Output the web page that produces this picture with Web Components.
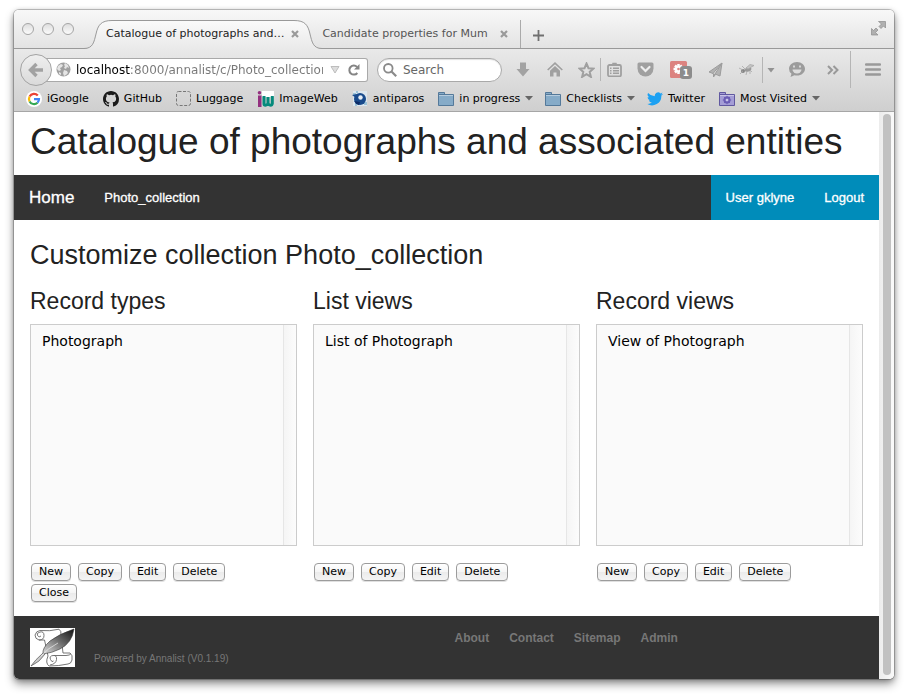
<!DOCTYPE html>
<html lang="en">
<head>
<meta charset="utf-8">
<title>Catalogue of photographs and associated entities</title>
<style>
  body { margin: 0; background: #fff; font-family: "Liberation Sans", Arial, sans-serif; color: #222; }
</style>
</head>
<body>
<browser-window>
  <tab-strip slot="chrome">
    <browser-tab active>Catalogue of photographs and…</browser-tab>
    <browser-tab>Candidate properties for Mum</browser-tab>
  </tab-strip>
  <nav-toolbar slot="chrome"></nav-toolbar>
  <bookmarks-bar slot="chrome">
    <bookmark-item icon="google">iGoogle</bookmark-item>
    <bookmark-item icon="github">GitHub</bookmark-item>
    <bookmark-item icon="blank">Luggage</bookmark-item>
    <bookmark-item icon="iw">ImageWeb</bookmark-item>
    <bookmark-item icon="anti">antiparos</bookmark-item>
    <bookmark-item icon="folder" menu>in progress</bookmark-item>
    <bookmark-item icon="folder" menu>Checklists</bookmark-item>
    <bookmark-item icon="twitter">Twitter</bookmark-item>
    <bookmark-item icon="smart" menu>Most Visited</bookmark-item>
  </bookmarks-bar>
  <site-header>Catalogue of photographs and associated entities</site-header>
  <site-menu></site-menu>
  <collection-editor>
    <list-panel heading="Record types" item="Photograph" close></list-panel>
    <list-panel heading="List views" item="List of Photograph"></list-panel>
    <list-panel heading="Record views" item="View of Photograph"></list-panel>
  </collection-editor>
  <site-footer></site-footer>
</browser-window>

<script>
const UI = '"DejaVu Sans", Verdana, sans-serif';

function define(name, render) {
  customElements.define(name, class extends HTMLElement {
    constructor() {
      super();
      this.attachShadow({ mode: 'open' });
    }
    connectedCallback() {
      this.shadowRoot.innerHTML = '<style>:host,*{box-sizing:border-box}svg{display:block}</style>' + render(this);
    }
  });
}

define('browser-window', () => `
  <style>
    :host { display: block; padding: 10px 14px 20px; }
    .frame { border-radius: 5px; overflow: hidden; background: #fff; }
    .shadow { border-radius: 5px; box-shadow: 0 0 0 1px rgba(0,0,0,.2), 0 5px 10px rgba(0,0,0,.42), 0 1px 5px rgba(0,0,0,.25); }
    .chrome { position: relative; background: linear-gradient(#f8f8f8, #e3e3e3 38px, #e9e9e9 39px, #cfcfcf); border-bottom: 1px solid #a6a6a6; }
    .view { display: flex; }
    main { flex: 1; min-width: 0; }
    .track { width: 15px; padding: 2px 3px 4px 4px; background: linear-gradient(90deg, #ececec, #fafafa); display: flex; }
    .thumb { flex: 1; border-radius: 4px; background: #c1c1c1; }
  </style>
  <div class="shadow"><div class="frame">
    <div class="chrome"><slot name="chrome"></slot></div>
    <div class="view"><main><slot></slot></main><div class="track"><div class="thumb"></div></div></div>
  </div></div>`);

define('tab-strip', () => `
  <style>
    :host { display: flex; height: 39px; padding: 10px 8px 0 8px; align-items: stretch; border-bottom: 1px solid #999; }
    .lights { display: flex; gap: 8px; padding: 3px 16px 0 0; }
    .lights i { width: 12px; height: 12px; border: 1px solid #a5a5a5; border-radius: 50%; background: linear-gradient(#dedede, #fbfbfb); }
    button { border: 0; padding: 0; background: none; }
    .add { border-left: 1px solid #aaa; padding: 3px 12px 0; }
    .full { margin: 0 0 12px auto; }
  </style>
  <div class="lights"><i></i><i></i><i></i></div>
  <slot></slot>
  <button class="add" aria-label="New tab"><svg width="11" height="11" viewBox="0 0 11 11"><path d="M5.500 0v11M0 5.500h11" stroke="#707070" stroke-width="1.800"/></svg></button>
  <button class="full" aria-label="Full screen"><svg width="15" height="15" viewBox="0 0 15 15" fill="#b0b0b0" stroke="#8c8c8c" stroke-width=".7"><path d="M7.500.500h7v6.500l-2-2-2.500 2.500-2-2 2.500-2.500zM.500 7.500l2 2 2.500-2.500 2 2-2.500 2.500 2.500 2.500H.500z"/></svg></button>`);

define('browser-tab', el => {
  const on = el.hasAttribute('active');
  return `
  <style>
    :host { display: flex; position: relative; align-items: center; font: 11px/16px ${UI}; color: ${on ? '#222' : '#555'}; padding: ${on ? '0 13px 0 16px' : '0 8px 0 6px'}; ${on ? 'z-index:1;' : ''} white-space: nowrap; }
    .shape { position: absolute; left: -6px; right: -6px; top: 0; height: 30px; display: flex; }
    .mid { flex: 1; background: linear-gradient(#fafafa, #e9e9e9); border-top: 1px solid #999; }
    .label { position: relative; }
    button { position: relative; border: 0; padding: 4px; margin-left: ${on ? 3 : 8}px; background: none; }
  </style>
  ${on ? `<svg width="0" height="0" style="position:absolute"><defs><linearGradient id="g" x2="0" y2="1"><stop stop-color="#fafafa"/><stop offset="1" stop-color="#e9e9e9"/></linearGradient></defs></svg>
  <div class="shape">
    <svg width="28" height="30" viewBox="0 0 28 30"><path d="M0 30V28.500C9 28.500 10 22 12 14 14 5 17 .500 28 .500V30z" fill="url(#g)"/><path d="M0 28.500C9 28.500 10 22 12 14 14 5 17 .500 28 .500" fill="none" stroke="#999"/></svg>
    <div class="mid"></div>
    <svg width="28" height="30" viewBox="0 0 28 30"><path d="M28 30V28.500C19 28.500 18 22 16 14 14 5 11 .500 0 .500V30z" fill="url(#g)"/><path d="M28 28.500C19 28.500 18 22 16 14 14 5 11 .500 0 .500" fill="none" stroke="#999"/></svg>
  </div>` : ''}
  <span class="label"><slot></slot></span>
  <button aria-label="Close tab"><svg width="8" height="8" viewBox="0 0 8 8"><path d="M1 1l6 6M7 1L1 7" stroke="#9a9a9a" stroke-width="2.200"/></svg></button>`;
});

define('tool-button', el => `
  <style>
    :host { display: block; align-self: center; flex: none; }
    button { display: flex; width: 100%; padding: 0; border: 0; background: none; justify-content: center; align-items: center; }
  </style>
  <button aria-label="${el.getAttribute('name')}"><slot></slot></button>`);

define('nav-toolbar', () => `
  <style>
    :host { display: flex; height: 41px; padding-left: 6px; align-items: center; font: 12px/16px ${UI}; }
    .back { position: relative; z-index: 1; flex: none; width: 32px; height: 32px; border: 1px solid #a3a3a3; border-radius: 50%; padding: 0; background: linear-gradient(#efefef, #dadada); display: flex; align-items: center; justify-content: center; }
    .url { flex: 1; min-width: 0; height: 24px; margin-left: -10px; padding: 0 7px 0 14px; display: flex; align-items: center; background: #fff; border: 1px solid #a9a9a9; border-left: 0; border-radius: 0 3px 3px 0; }
    .url input { flex: 1; min-width: 0; margin: 0 7px 0 5px; padding: 0; border: 0; outline: 0; font: inherit; background: linear-gradient(90deg, #000 54px, #777 54px); background-clip: text; -webkit-background-clip: text; -webkit-text-fill-color: transparent; }
    .url svg { flex: none; }
    .url button { border: 0; padding: 0; background: none; margin-left: 8px; }
    .search { flex: none; width: 125px; height: 24px; margin: 0 5px 0 9px; padding: 0 10px 0 5px; display: flex; align-items: center; gap: 6px; background: #fff; border: 1px solid #a9a9a9; border-radius: 12px; box-shadow: inset 0 1px 1px rgba(0,0,0,.12); }
    .search input { flex: 1; min-width: 0; padding: 0; border: 0; outline: 0; background: none; font: inherit; }
    .search input::placeholder { color: #666; opacity: 1; }
    .w16 { width: 16px; } .w26 { width: 26px; } .w30 { width: 30px; } .w32 { width: 32px; } .w34 { width: 34px; } .w38 { width: 38px; } .w36 { width: 36px; } .w43 { width: 43px; }
    .sep { box-shadow: -1px 0 0 #b5b5b5; padding: 4px 0; }
    .tall { padding: 12px 0; }
  </style>
  <button class="back" aria-label="Back"><svg width="16" height="16" viewBox="0 0 16 16"><path d="M15 8H3M8.500 2L2.500 8l6 6" fill="none" stroke="#a2a2a2" stroke-width="3.400"/></svg></button>
  <div class="url">
    <svg width="15" height="15" viewBox="0 0 15 15"><circle cx="7.500" cy="7.500" r="7" fill="#a0a0a0"/><path d="M2 4l3-2 2 1-1 2-2 1 1 2-2 1-2-2zM9 1l3 2 1 3-2-1-1 2-2-1 1-2-1-1zM8 8l3 1 1 2-2 2-2 1-1-3zM3 10l2 1 0 2-2-1z" fill="#e5e5e5"/></svg>
    <input aria-label="Address" value="localhost:8000/annalist/c/Photo_collection/">
    <svg width="10" height="9" viewBox="0 0 10 9"><path d="M1 1.500h8L5 8z" fill="#ddd" stroke="#bdbdbd"/></svg>
    <button aria-label="Reload"><svg width="12" height="12" viewBox="0 0 12 12"><path d="M9.300 9A4.500 4.500 0 1 1 9 2.900" fill="none" stroke="#858585" stroke-width="2"/><path d="M11.500 0v5.500H6z" fill="#858585"/></svg></button>
  </div>
  <label class="search">
    <svg width="14" height="14" viewBox="0 0 14 14" fill="none" stroke="#8a8a8a"><circle cx="5.300" cy="5.300" r="4.300" stroke-width="1.800"/><path d="M8.500 8.500l4.700 4.700" stroke-width="2.200"/></svg>
    <input aria-label="Search" placeholder="Search">
  </label>
  <tool-button class="w32" name="Downloads"><svg width="14" height="15" viewBox="0 0 14 15"><path d="M4 .500h6v6.500h3.500L7 14.500.500 7H4z" fill="#a3a3a3"/></svg></tool-button>
  <tool-button class="w32" name="Home"><svg width="16" height="15" viewBox="0 0 16 15"><path d="M.700 8L8 1.200 15.300 8" fill="none" stroke="#a0a0a0" stroke-width="1.600"/><path d="M3 8.700l5-4.600 5 4.600V14.500H9.500v-4h-3v4H3z" fill="#a0a0a0"/></svg></tool-button>
  <tool-button class="w30" name="Bookmark"><svg width="17" height="16" viewBox="0 0 17 16"><path d="M8.500 1.500l2 4.700 5 .400-3.800 3.300 1.200 5-4.400-2.700-4.400 2.700 1.200-5L1.500 6.600l5-.400z" fill="none" stroke="#a0a0a0" stroke-width="2"/></svg></tool-button>
  <tool-button class="w26 sep" name="Bookmark list"><svg width="15" height="15" viewBox="0 0 15 15"><rect x="1" y="3" width="13" height="11.300" rx="1.500" fill="none" stroke="#a0a0a0" stroke-width="1.800"/><path d="M4.500 3.500L5.500 .700h4l1 2.800z" fill="#a0a0a0"/><path d="M3 6.300h1.500M6 6.300h6M3 8.800h1.500M6 8.800h6M3 11.300h1.500M6 11.300h6" stroke="#a0a0a0" stroke-width="1.400"/></svg></tool-button>
  <tool-button class="w36" name="Pocket"><svg width="17" height="15" viewBox="0 0 17 15"><path d="M2 .500h13q1.500 0 1.500 1.500v4.500a8 8 0 0 1-16 0V2Q.500.500 2 .500z" fill="#a0a0a0"/><path d="M4.500 5l4 4 4-4" fill="none" stroke="#eee" stroke-width="2.200" stroke-linecap="round"/></svg></tool-button>
  <tool-button class="w36" name="Blocked items: 1"><svg width="22" height="19" viewBox="0 0 22 19"><rect width="17" height="17" y="1" rx="1.500" fill="#dc8380"/><path d="M8.500 4v10M3.500 9h10M5 5.500l7 7M12 5.500l-7 7" stroke="#fff" stroke-width="2.500"/><circle cx="8.500" cy="9" r="1.300" fill="#dc8380"/><rect x="10" y="6" width="12" height="13" rx="3" fill="#8c8c8c"/><text x="16" y="16" text-anchor="middle" font-family="DejaVu Sans" font-size="9" font-weight="bold" fill="#fff">1</text></svg></tool-button>
  <tool-button class="w32" name="Send"><svg width="15" height="16" viewBox="0 0 15 16"><path d="M14 1L1 10l4 1.500zM14 1L7 12l5 2z" fill="#b2b2b2" stroke="#9c9c9c"/><path d="M5.500 11.500V15l2-2.500" fill="#9c9c9c" stroke="#9c9c9c"/></svg></tool-button>
  <tool-button class="w32" name="Bug tracker"><svg width="16" height="13" viewBox="0 0 16 13"><ellipse cx="9" cy="6.500" rx="3.500" ry="2" fill="#9a9a9a" transform="rotate(-20 9 6.500)"/><circle cx="4" cy="8" r="2" fill="#858585"/><path d="M7 5L11 1.500 15 2.500 9 6zM0 5l4 2M1 11l3-3M7 12l1-4M11 11l0-3M13 9l-2-2M3 3l3 3" fill="#c5c5c5" stroke="#a8a8a8" stroke-width=".8"/></svg></tool-button>
  <tool-button class="w16 sep" name="Tracker options"><svg width="8" height="18" viewBox="0 0 8 18"><path d="M.500 7h7L4 11.500z" fill="#929292"/></svg></tool-button>
  <tool-button class="w36" name="Chat"><svg width="16" height="15" viewBox="0 0 16 15"><path d="M8 0c4.500 0 8 3 8 6.800s-3.500 6.800-8 6.800q-1.500 0-2.500-.400L1.500 15l1-3.200Q0 10 0 6.800C0 3 3.500 0 8 0z" fill="#9c9c9c"/><path d="M3.500 7.500h9a4.500 4 0 0 1-9 0z" fill="#ddd"/><path d="M5 3.500v2M11 3.500v2" stroke="#ddd" stroke-width="1.800"/></svg></tool-button>
  <tool-button class="w36" name="More tools"><svg width="12" height="10" viewBox="0 0 12 10"><path d="M1 1l4 4-4 4M6.500 1l4 4-4 4" fill="none" stroke="#999" stroke-width="2"/></svg></tool-button>
  <tool-button class="w43 sep tall" name="Menu"><svg width="16" height="13" viewBox="0 0 16 13"><path d="M1 1.500h14M1 6.500h14M1 11.500h14" stroke="#999" stroke-width="2.400" stroke-linecap="round"/></svg></tool-button>`);

define('bookmarks-bar', () => `
  <style>:host { display: flex; height: 21px; padding: 0 12px 4px; gap: 14px; align-items: center; }</style>
  <slot></slot>`);

const folder = (a, b, extra = '') => `<svg width="16" height="15" viewBox="0 0 16 15"><path d="M.500 4V1.500h6V4" fill="${a}" stroke="${b}"/><path d="M.500 3.500h15v11H.500z" fill="${a}" stroke="${b}"/><path d="M1 4.500h14" stroke="#fff" stroke-opacity=".4"/>${extra}</svg>`;
const ICONS = {
  google: `<svg width="16" height="16" viewBox="0 0 16 16"><circle cx="8" cy="8" r="8" fill="#fff"/><g fill="none" stroke-width="2.200"><path d="M11.800 4.600A5 5 0 0 0 3.600 5.600" stroke="#ea4335"/><path d="M3.600 5.600a5 5 0 0 0 0 4.800" stroke="#fbbc05"/><path d="M3.600 10.400a5 5 0 0 0 7.900 1.300" stroke="#34a853"/><path d="M11.500 11.700A5 5 0 0 0 13 8.100H8" stroke="#4285f4"/></g></svg>`,
  github: `<svg width="16" height="16" viewBox="0 0 16 16"><path fill="#1b1b1b" d="M8 0C3.580 0 0 3.580 0 8c0 3.540 2.290 6.530 5.470 7.590.400.070.550-.170.550-.380 0-.190-.010-.820-.010-1.490-2.010.370-2.530-.490-2.690-.940-.090-.230-.480-.940-.820-1.130-.280-.150-.680-.520-.010-.530.630-.010 1.080.580 1.230.820.720 1.210 1.870.870 2.330.660.070-.520.280-.870.510-1.070-1.780-.200-3.640-.890-3.640-3.950 0-.870.310-1.590.820-2.150-.080-.200-.360-1.020.080-2.120 0 0 .670-.210 2.200.820a7.500 7.500 0 0 1 4 0c1.530-1.040 2.200-.820 2.200-.820.440 1.100.160 1.920.080 2.120.510.560.820 1.270.820 2.150 0 3.070-1.870 3.750-3.650 3.950.290.250.540.730.540 1.480 0 1.070-.010 1.930-.010 2.200 0 .210.150.460.550.380A8 8 0 0 0 16 8c0-4.420-3.580-8-8-8z"/></svg>`,
  blank: `<svg width="15" height="15" viewBox="0 0 15 15"><rect x=".5" y=".5" width="14" height="14" rx="2" fill="none" stroke="#777" stroke-dasharray="3 1.500"/></svg>`,
  iw: `<svg width="17" height="16" viewBox="0 0 17 16"><path fill="#fff" d="M5 0h12v6H5z"/><circle cx="2.500" cy="1.800" r="1.800" fill="#93307f"/><path d="M1 4.500h3.500V16H1z" fill="#93307f"/><path d="M7 5v7.500q0 1.700 1.500 1.700t2.500-1.700V6v6.500q1 1.700 2.500 1.700t1.800-1.700V5" fill="none" stroke="#058a7c" stroke-width="3"/></svg>`,
  anti: `<svg width="16" height="16" viewBox="0 0 16 16"><path fill="#dce6ee" d="M1 0h14v15H1z"/><path d="M1 2h3v2H1zM4 0h2v2H4zM12 11h3v3h-3zM3 12h2v3H3z" fill="#9bc3d8"/><circle cx="8" cy="8" r="6" fill="#184a8c"/><path d="M2 10a7 7 0 0 0 5 4l1-3z" fill="#0b2b66"/><circle cx="8.500" cy="6.500" r="2.200" fill="#e6eef5"/><path d="M0 4l5-1-1 4z" fill="#184a8c"/></svg>`,
  folder: folder('#86abc8', '#54799a'),
  smart: folder('#a49dd6', '#6058a0', '<circle cx="8" cy="9" r="2.500" fill="none" stroke="#6a5db4" stroke-width="2"/><path d="M8 4.800v8.400M3.800 9h8.400M5 6l6 6M11 6l-6 6" stroke="#6a5db4"/><circle cx="8" cy="9" r="1.300" fill="#c9c4ea"/>'),
  twitter: `<svg width="16" height="14" viewBox="0 0 24 20"><path fill="#1da1f2" d="M24 2.400a10 10 0 0 1-2.800.800A5 5 0 0 0 23.300.400a10 10 0 0 1-3.100 1.200A4.900 4.900 0 0 0 11.800 6 14 14 0 0 1 1.700.900a4.900 4.900 0 0 0 1.500 6.600A5 5 0 0 1 1 6.900a4.900 4.900 0 0 0 4 4.900 5 5 0 0 1-2.300.100 4.900 4.900 0 0 0 4.600 3.400A10 10 0 0 1 0 17.300 14 14 0 0 0 21.500 4.800 10 10 0 0 0 24 2.400z"/></svg>`
};

define('bookmark-item', el => {
  const menu = el.hasAttribute('menu');
  const tag = menu ? 'button' : 'a href="#"';
  return `
  <style>
    :host { display: block; flex: none; }
    a, button { display: flex; align-items: center; gap: 5px; height: 17px; border: 0; padding: 0; background: none; font: 11px/16px ${UI}; color: #000; text-decoration: none; white-space: nowrap; }
    .caret { margin-right: -2px; }
  </style>
  <${tag}>${ICONS[el.getAttribute('icon')]}<slot></slot>${menu ? '<svg class="caret" width="8" height="5" viewBox="0 0 8 5"><path d="M0 0h8L4 4.500z" fill="#666"/></svg>' : ''}</${menu ? 'button' : 'a'}>`;
});

define('site-header', () => `
  <style>
    :host { display: block; padding: 6px 16px 9px; }
    h1 { margin: 0; font-size: 37px; line-height: 48px; font-weight: 400; white-space: nowrap; }
  </style>
  <h1><slot></slot></h1>`);

define('site-menu', () => `
  <style>
    :host { display: block; background: #333; }
    nav, .user { display: flex; }
    a { padding: 0 15px; font-size: 13px; line-height: 45px; color: #fff; text-decoration: none; -webkit-text-stroke: .3px #fff; }
    .home { font-size: 17px; }
    .user { margin-left: auto; background: #008cba; }
  </style>
  <nav><a class="home" href="#">Home</a><a href="#">Photo_collection</a>
    <div class="user"><a href="#">User gklyne</a><a href="#">Logout</a></div></nav>`);

define('collection-editor', () => `
  <style>
    :host { display: block; padding: 16px 16px 14px; }
    h2 { margin: 0 0 12px; font-size: 27px; line-height: 38px; font-weight: 400; }
    .cols { display: grid; grid-template-columns: repeat(3, minmax(0, 1fr)); gap: 16px; }
  </style>
  <h2>Customize collection Photo_collection</h2>
  <div class="cols"><slot></slot></div>`);

define('list-panel', el => `
  <style>
    :host { display: block; }
    h3 { margin: 0 0 8px; font-size: 23px; line-height: 30px; font-weight: 400; }
    .box { display: flex; height: 222px; border: 1px solid #ccc; background: #fafafa; }
    select { flex: 1; min-width: 0; border: 0; outline: 0; margin: 0; padding: 8px 9px; background: none; overflow: hidden; font: 14px/18px ${UI}; color: #000; }
    option { padding: 0 2px; min-height: 18px; color: #000; }
    .track { width: 13px; border-left: 1px solid #e6e6e6; background: linear-gradient(90deg, #f5f5f5, #fcfcfc); }
    .row { display: flex; gap: 7px; padding-left: 1px; margin-top: 3px; }
    .first { margin-top: 17px; }
    .row button { height: 18px; padding: 0 7px; border: 1px solid #9c9c9c; border-radius: 4px; background: linear-gradient(#fff, #f5f5f5 50%, #ebebeb 51%, #f4f4f4); box-shadow: 0 1px 0 rgba(0,0,0,.12); font: 11px/14px ${UI}; color: #000; }
  </style>
  <h3><label for="list">${el.getAttribute('heading')}</label></h3>
  <div class="box"><select id="list" size="10"><option>${el.getAttribute('item')}</option></select><div class="track"></div></div>
  <div class="row first"><button>New</button><button>Copy</button><button>Edit</button><button>Delete</button></div>
  ${el.hasAttribute('close') ? '<div class="row"><button>Close</button></div>' : ''}`);

define('site-footer', () => `
  <style>
    :host { display: grid; grid-template-columns: 1fr 1fr; padding: 12px 16px; background: #333; color: #777; }
    .brand { display: flex; align-items: flex-end; gap: 19px; font-size: 10px; line-height: 16px; }
    nav { display: flex; gap: 20px; padding-left: 8px; }
    a { font-size: 12px; line-height: 21px; font-weight: 700; color: #777; text-decoration: none; }
  </style>
  <div class="brand">
    <svg width="45" height="39" viewBox="0 0 45 39"><defs><linearGradient id="q" x1="1" y1="0" x2="0" y2="1"><stop stop-color="#111"/><stop offset=".45" stop-color="#666"/><stop offset="1" stop-color="#ddd"/></linearGradient></defs>
      <path fill="#fff" d="M0 0h45v39H0z"/>
      <g fill="#fff" stroke="#666" stroke-width=".9"><path d="M10 2.500Q20 3.500 29 1.200q2.500 1.500 2 6L33 25H40q3 2 2 7-1 4-4 4-9 2-19 2-4-3-1-10L14.500 12H9q-4-1-4-5 1-4 5-4.500z"/><path d="M9 12q5 0 5-4.500T10 4 7.500 7.500 11 8M20 37q6-1 6.500-5.500T23 27.500t-2.500 4 3 1.500M24 27.500h12q4 0 5-2" fill="none"/></g>
      <path d="M44 1Q42 15 30 21 22 25 13 26 12 20 20 13 29 6 44 1z" fill="url(#q)" stroke="#333" stroke-width=".6"/>
      <path d="M13 25Q5 32 1 38q9-4 14-12z" fill="#ccc" stroke="#555" stroke-width=".7"/><path d="M28 15Q18 20 11 28" fill="none" stroke="#eee" stroke-width=".7"/></svg>
    <span>Powered by Annalist (V0.1.19)</span>
  </div>
  <nav><a href="#">About</a><a href="#">Contact</a><a href="#">Sitemap</a><a href="#">Admin</a></nav>`);
</script>
</body>
</html>
